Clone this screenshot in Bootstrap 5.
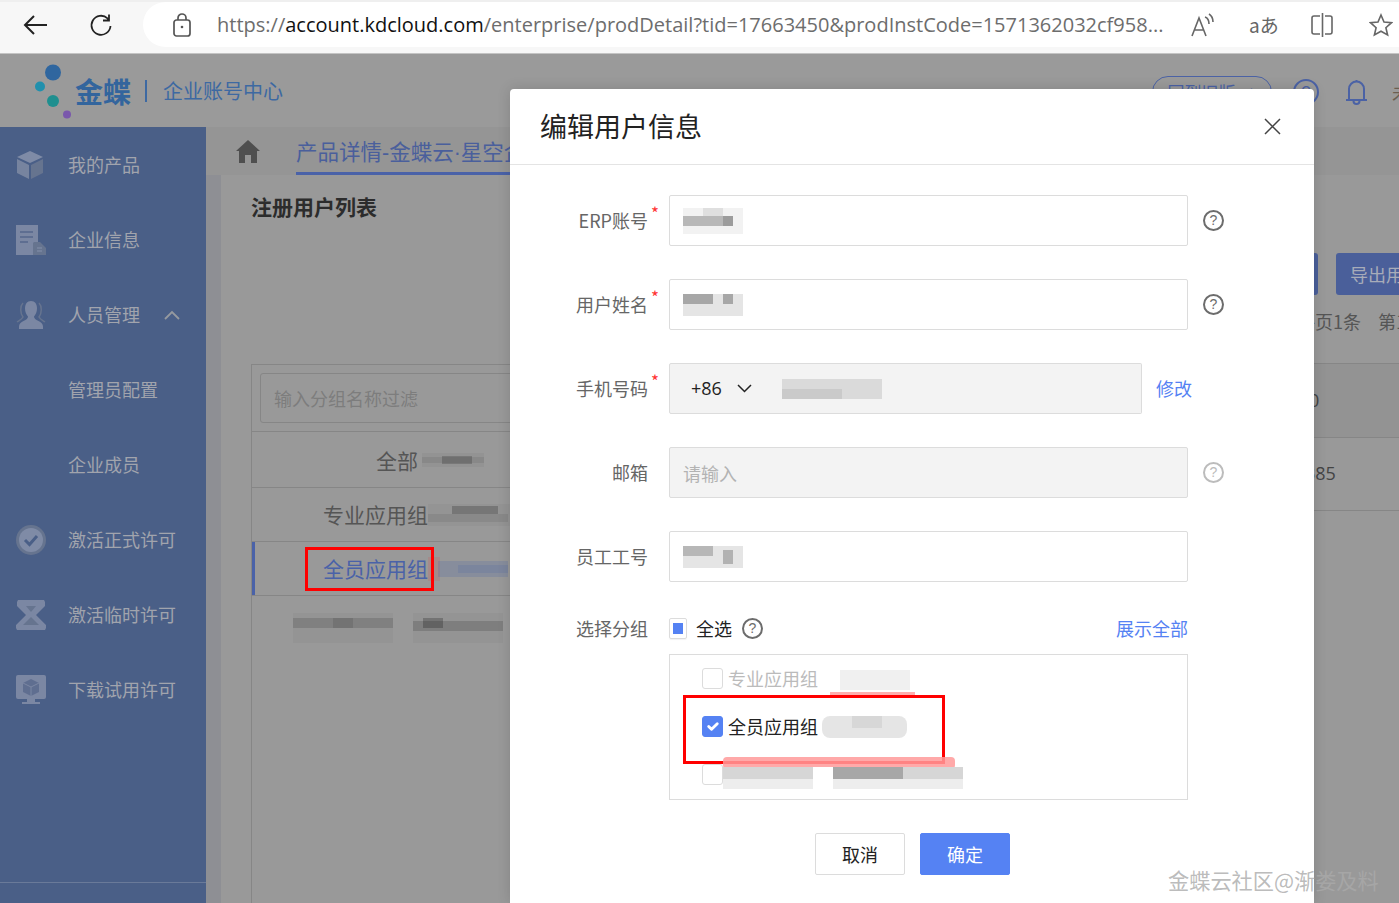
<!doctype html>
<html lang="zh">
<head>
<meta charset="utf-8">
<title>编辑用户信息</title>
<link rel="stylesheet" href="https://cdn.jsdelivr.net/npm/bootstrap@5.3.0/dist/css/bootstrap.min.css">
<style>
html,body{height:903px;overflow:hidden}
body{width:1399px;background:#999;font-family:"Noto Sans CJK SC","Liberation Sans",sans-serif;font-size:18px;color:#333;position:relative}
svg{display:block;flex:none}
.chrome-bar{height:54px;background:#f7f7f7;border-top:2px solid #efefef;border-bottom:1px solid #c4c4c4;padding:0 0 6px 23px}
.reload-ic{margin-left:42px}
.url-pill{margin-left:30px;width:1300px;height:45px;background:#fff;border-radius:23px 0 0 23px;padding-left:30px}
.url-text{font-family:"Open Sans","Noto Sans",sans-serif;font-size:20px;color:#6d6d6d;white-space:nowrap;margin-left:26px;width:948px;overflow:hidden}
.url-text b{font-weight:400;color:#111}
.read-ic{margin-left:25px}
.trans-ic{margin-left:33px;font-size:19px;line-height:24px;color:#666}
.split-ic{margin-left:31px}
.star-ic{margin-left:35px}
.app-head{height:73px;background:#9a9a9a;padding-left:30px;flex:none}
.brand-cn{font-size:28px;font-weight:700;color:#33659d;line-height:1}
.brand-bar{width:2px;height:22px;background:#3d69a2;margin:0 16px 0 14px}
.brand-sub{font-size:20px;color:#3d69a2}
.old-pill{width:120px;height:32px;border:1px solid #4b62a5;border-radius:16px;color:#4b62a5;font-size:17px;margin-right:21px;line-height:30px;text-align:center}
.head-right{padding-top:22px;align-self:flex-start}
.bell-ic{margin-left:26px}
.user-char{margin-left:24px;margin-right:-13px;color:#6b5e50;width:20px;overflow:hidden;white-space:nowrap}
.app-body{height:776px}
.side-nav{width:206px;background:#4a5f87;flex:none}
.nav-row{height:75px;padding-left:16px;color:#a1a4ad;font-size:18px}
.nav-label{margin-left:22px}
.nav-slot{width:30px;flex:none}
.nav-chev{margin-left:24px}
.side-rule{height:1px;background:#6a7a99;margin-top:155px}
.main-area{width:1193px;flex:none}
.tab-strip{height:48px;background:#959595;padding-left:30px}
.tab-title{margin-left:36px;font-family:"Liberation Sans","Noto Sans CJK SC",sans-serif;font-size:21.5px;color:#4a5f9c;border-bottom:3px solid #4a62a8;height:48px;line-height:53px;white-space:nowrap;width:300px;overflow:hidden}
.main-rest{height:728px}
.gutter{width:15px;background:#8e8f94;flex:none}
.main-pane{flex:1;padding:18px 0 0 30px}
.pane-title{font-size:21px;font-weight:700;color:#2c2c2c;line-height:26px}
.pane-cols{margin-top:34px}
.tree-col{width:400px;margin-top:111px;flex:none;border-left:1px solid #868686;border-top:1px solid #868686;height:539px}
.tree-search{height:67px;padding:8px 0 0 8px;border-bottom:1px solid #868686}
.tree-search div{height:50px;border:1px solid #868686;border-radius:3px;padding-left:13px;line-height:48px;color:#7d7d7d}
.tree-item{height:54px;border-bottom:1px solid #868686;font-size:21px;color:#555;padding-top:2px;white-space:nowrap}
.tree-item.is-first{height:55.5px}
.tree-item.is-on{color:#4a62a8;box-shadow:inset 3px 0 0 #4a62a8}
.tree-name{width:176px;text-align:right;flex:none}
.is-first .tree-name{width:166px}
.tree-last{height:64px;padding-left:41px}
.right-col{width:776px;margin-left:9px;flex:none}
.tool-row{gap:18px}
.tool-btn{height:42px;width:100px;background:#4a5f9a;color:#a7acb9;border-radius:3px;line-height:42px;text-align:center;white-space:nowrap;overflow:hidden;font-size:18px}
.pager{margin-top:8px;height:37px;color:#555;gap:17px;padding-right:12px}
.data-rows{margin-top:23px;border-top:1px solid #868686}
.data-row{height:73.5px;border-bottom:1px solid #868686;padding-left:645px;color:#444;font-family:"Open Sans",sans-serif;font-size:18px}
.data-row.is-dim{background:#939393}
.modal-box.modal-content{position:absolute;left:510px;top:89px;width:804px;height:814px;background:#fff;color:#333;border:0;border-radius:4px 4px 0 0;box-shadow:0 0 14px rgba(0,0,0,.14);display:block;overflow:visible}
.modal-box .modal-header{height:76px;padding:0 30px;border-bottom:1px solid #e4e4e4;border-radius:0}
.modal-box h5{font-size:27px;font-weight:400;color:#222;margin:0}
.close-btn{margin-right:3px}
.form-zone{padding:30px 0 0 0}
.form-line{height:51px;margin-bottom:33px}
.field-label{width:138px;flex:none;text-align:right;color:#666;position:relative;white-space:nowrap;font-size:18px}
.req-mark{position:absolute;left:141px;top:-4px;color:#f33;font-size:17px;line-height:20px}
.field-box{margin-left:21px;width:519px;height:51px;flex:none;border:1px solid #dcdcdc;border-radius:2px;padding:0 13px;box-shadow:none;font-size:18px}
.field-box:disabled{background:#f3f3f3;border-color:#dcdcdc}
.field-box::placeholder{color:#b3b3b3}
.help-dot{width:21px;height:21px;border:2px solid #6c6c6c;border-radius:50%;font-size:14px;line-height:17px;text-align:center;color:#6c6c6c;font-family:"Liberation Sans",sans-serif;flex:none;display:block}
.help-dot.is-off{border-color:#bcbcbc;color:#bcbcbc}
.help-gap{margin-left:15px}
.help-near{margin-left:10px}
.phone-group{margin-left:21px;width:473px;height:51px;flex:none;flex-wrap:nowrap}
.phone-code.input-group-text{width:97px;background:#f3f3f3;border:1px solid #dcdcdc;border-radius:2px 0 0 2px;padding:0 13px 0 21px;font-family:"Open Sans",sans-serif;font-size:18px;color:#222;justify-content:space-between}
.phone-num{background:#f3f3f3;border:1px solid #dcdcdc;border-left:0;border-radius:0 2px 2px 0;flex:1;padding-left:17px}
.link-blue{color:#5582f3;text-decoration:none;font-size:18px;white-space:nowrap}
.link-edit{margin-left:14px}
.pick-line{height:27px}
.pick-head{margin-left:21px;width:519px;flex:none}
.mini-box{width:18px;height:21px;border:1px solid #dcdcdc;border-radius:2px;padding:4px 3px;margin-right:9px;box-shadow:0 1px 1px rgba(0,0,0,.05)}
.mini-box i{display:block;width:10px;height:11px;background:#5582f3}
.pick-all{color:#222}
.pick-panel{margin:12px 0 0 159px;width:519px;height:146px;border:1px solid #dcdcdc;position:relative;padding:13px 0 0 32px;flex:none}
.pick-item{height:21px;margin-bottom:27px;color:#222;font-size:18px;white-space:nowrap}
.pick-item.is-off{color:#bbb}
.pick-item .form-check-input{width:21px;height:21px;margin:0 5px 0 0;border:1px solid #dcdcdc;border-radius:3px;float:none;flex:none}
.pick-item .form-check-input:disabled{opacity:1;background-color:#fff}
.pick-item .form-check-input:checked{background-color:#5582f3;border-color:#5582f3}
.blur-a{margin-left:12px;margin-top:8px}
.blur-b{margin-left:4px}
.blur-c{left:53px;top:102px}
.red-frame{position:absolute;border:3px solid #f00;pointer-events:none}
.frame-a{left:13px;top:40px;width:262px;height:69px}
.frame-b{left:305px;top:547px;width:129px;height:44px}
.modal-foot{gap:15px;margin-top:33px;padding-left:305px}
.foot-btn{width:90px;height:42px;border-radius:2px;font-size:18px;padding:0;line-height:40px}
.foot-cancel{background:#fff;border:1px solid #dcdcdc;color:#222}
.foot-ok,.foot-ok:hover{background:#5582f3;border:1px solid #5582f3;color:#fff}
.mark-text{position:absolute;left:1168px;top:863px;font-size:21.2px;color:rgba(170,170,170,.8);white-space:nowrap;line-height:34px}
</style>
</head>
<body>

<div class="chrome-bar d-flex align-items-center">
  <svg width="24" height="22" viewBox="0 0 24 22" fill="none" stroke="#222" stroke-width="2"><path d="M24 11H2M11 2l-9 9 9 9"/></svg>
  <svg class="reload-ic" width="24" height="24" viewBox="0 0 24 24" fill="none" stroke="#222" stroke-width="1.800"><path d="M20 1.500v6h-6M21.500 13a9.500 9.500 0 1 1-3-7.700L20 7.500"/></svg>
  <div class="url-pill d-flex align-items-center">
    <svg width="18" height="24" viewBox="0 0 18 24" fill="none" stroke="#555" stroke-width="1.700"><rect x="1" y="7" width="16" height="16" rx="2.500"/><path d="M5 7V5a4 4 0 0 1 8 0v2"/><circle cx="9" cy="14" r="1.300" fill="#555" stroke="none"/></svg>
    <div class="url-text">https://<b>account.kdcloud.com</b>/enterprise/prodDetail?tid=17663450&amp;prodInstCode=1571362032cf958...</div>
    <svg class="read-ic" width="26" height="24" viewBox="0 0 26 24" fill="none" stroke="#666" stroke-width="1.600"><path d="M2 23 9 5l7 18M4.500 17h9M15 4c3 1 4 4 4 7M19 1c3 2 4 5 4 8"/></svg>
    <div class="trans-ic">aあ</div>
    <svg class="split-ic" width="24" height="24" viewBox="0 0 24 24" fill="none" stroke="#666" stroke-width="1.600"><path d="M10 3H4a2 2 0 0 0-2 2v14a2 2 0 0 0 2 2h6M15 3h5a2 2 0 0 1 2 2v14a2 2 0 0 1-2 2h-5M12.500 0v24"/></svg>
    <svg class="star-ic" width="24" height="24" viewBox="0 0 24 24" fill="none" stroke="#666" stroke-width="1.600"><path d="M12 2l3 7 7.500.7-5.600 5 1.700 7.300L12 18.200 5.400 22l1.700-7.300-5.600-5L9 9z"/></svg>
  </div>
</div>

<div class="app-head d-flex align-items-center">
  <svg width="45" height="58" viewBox="0 0 45 58"><circle cx="23" cy="10.500" r="8" fill="#2f669f"/><circle cx="10" cy="24.500" r="5" fill="#2190ad"/><circle cx="23" cy="39" r="6" fill="#1f8f8f"/><circle cx="37" cy="52.500" r="4" fill="#7a58ac"/></svg>
  <span class="brand-cn">金蝶</span><i class="brand-bar"></i><span class="brand-sub">企业账号中心</span>
  <div class="head-right d-flex align-items-center ms-auto">
    <div class="old-pill">回到旧版 →</div>
    <svg width="26" height="26" viewBox="0 0 26 26" fill="none" stroke="#4b62a5" stroke-width="2"><circle cx="13" cy="13" r="12"/><text x="13" y="19" font-size="17" text-anchor="middle" fill="#4b62a5" stroke="none" font-family="Liberation Sans">?</text></svg>
    <svg class="bell-ic" width="23" height="26" viewBox="0 0 23 26" fill="none" stroke="#4b62a5" stroke-width="2"><path d="M1 21h21M4 21V10a7.500 7.500 0 0 1 15 0v11M11.500 1v2M8.500 22a3 3 0 0 0 6 0"/></svg>
    <span class="user-char">未</span>
  </div>
</div>

<div class="app-body d-flex">
  <nav class="side-nav">
    <div class="nav-row d-flex align-items-center"><span class="nav-slot">
      <svg width="28" height="28" viewBox="0 0 28 28"><path d="M14 0 27 6 14 12 1 6z" fill="#7f8ba6"/><path d="M1 8l12 6v14L1 22z" fill="#77849f"/><path d="M27 8l-12 6v14l12-6z" fill="#66748f"/></svg></span><span class="nav-label">我的产品</span></div>
    <div class="nav-row d-flex align-items-center"><span class="nav-slot">
      <svg width="30" height="30" viewBox="0 0 30 30"><path d="M0 0h22v30H0z" fill="#7b87a3"/><path d="M4 7h13M4 12h13M4 17h8" stroke="#55678c" stroke-width="1.600"/><path d="M18 17h6l6 6v7H17V18z" fill="#66748f"/><path d="M21 23h5M21 26h5" stroke="#7b87a3" stroke-width="1.500"/></svg></span><span class="nav-label">企业信息</span></div>
    <div class="nav-row d-flex align-items-center"><span class="nav-slot">
      <svg width="30" height="28" viewBox="0 0 30 28"><path d="M7 2C4 5 4 12 7 16c-1 2-3 3-6 5M23 2c3 3 3 10 0 14 1 2 3 3 6 5" fill="none" stroke="#66748f" stroke-width="1.500"/><path d="M15 0c4 0 6 3 6 7.500 0 3.500-1.500 6.500-3 8 0 2 1.500 3 4.500 4.500 2.500 1 4.500 3 4.500 5.500V28H3v-2.500C3 23 5 21 7.500 20c3-1.500 4.500-2.500 4.500-4.500-1.500-1.500-3-4.500-3-8C9 3 11 0 15 0z" fill="#7b87a3"/></svg></span><span class="nav-label">人员管理</span>
      <svg class="nav-chev" width="16" height="10" viewBox="0 0 16 10" fill="none" stroke="#95999f" stroke-width="1.800"><path d="M1 9l7-7 7 7"/></svg></div>
    <div class="nav-row d-flex align-items-center"><span class="nav-slot"></span><span class="nav-label">管理员配置</span></div>
    <div class="nav-row d-flex align-items-center"><span class="nav-slot"></span><span class="nav-label">企业成员</span></div>
    <div class="nav-row d-flex align-items-center"><span class="nav-slot">
      <svg width="30" height="30" viewBox="0 0 30 30"><circle cx="15" cy="15" r="15" fill="#66748f"/><circle cx="15" cy="15" r="12" fill="#7f8ba6"/><path d="M9 15l4.500 4.500L21 11" fill="none" stroke="#4a5f87" stroke-width="3"/></svg></span><span class="nav-label">激活正式许可</span></div>
    <div class="nav-row d-flex align-items-center"><span class="nav-slot">
      <svg width="30" height="30" viewBox="0 0 30 30"><path d="M2 0h26l1 2v4l-9 9 10 10v3l-1 2H1l-1-2v-3l10-10-9-9V2z" fill="#7b87a3"/><path d="M10 6h10l-5 6zM15 17l8 8H7z" fill="#66748f"/></svg></span><span class="nav-label">激活临时许可</span></div>
    <div class="nav-row d-flex align-items-center"><span class="nav-slot">
      <svg width="30" height="30" viewBox="0 0 30 30"><rect width="30" height="24" rx="2" fill="#7b87a3"/><path d="M11 24h8v3h-8zM6 27h18v2H6z" fill="#7b87a3"/><path d="M15 4l8 4v9l-8 4-8-4V8z" fill="#5f6e90"/><path d="M7 8l8 4 8-4M15 12v9" stroke="#7b87a3" stroke-width="1" fill="none"/></svg></span><span class="nav-label">下载试用许可</span></div>
    <div class="side-rule"></div>
  </nav>

  <div class="main-area">
    <div class="tab-strip d-flex align-items-center">
      <svg width="24" height="23" viewBox="0 0 24 23"><path d="M12 0 24 11h-3v12h-6v-8H9v8H3V11H0z" fill="#4f4f4f"/></svg>
      <div class="tab-title">产品详情-金蝶云·星空企业版</div>
    </div>
    <div class="main-rest d-flex">
      <div class="gutter"></div>
      <div class="main-pane">
        <div class="pane-title">注册用户列表</div>
        <div class="pane-cols d-flex">
          <div class="tree-col">
            <div class="tree-search"><div>输入分组名称过滤</div></div>
            <div class="tree-item is-first d-flex align-items-center"><span class="tree-name">全部</span>
              <svg width="62" height="22" viewBox="0 0 62 22" class="ms-1"><g shape-rendering="crispEdges"><rect y="4" width="62" height="14" fill="#000" opacity=".04"/><rect x="20" y="7" width="30" height="8" fill="#000" opacity=".18"/><rect x="0" y="8" width="62" height="6" fill="#000" opacity=".07"/></g></svg></div>
            <div class="tree-item d-flex align-items-center"><span class="tree-name">专业应用组</span>
              <svg width="90" height="22" viewBox="0 0 90 22"><g shape-rendering="crispEdges"><rect width="90" height="22" fill="#000" opacity=".03"/><rect x="24" y="2" width="46" height="8" fill="#000" opacity=".2"/><rect x="0" y="10" width="80" height="8" fill="#000" opacity=".07"/></g></svg></div>
            <div class="tree-item is-on d-flex align-items-center"><span class="tree-name">全员应用组</span>
              <svg width="90" height="24" viewBox="0 0 90 24"><g shape-rendering="crispEdges"><rect x="0" width="12" height="24" fill="#c46a6a" opacity=".3"/><rect x="10" y="4" width="70" height="16" fill="#4a62a8" opacity=".22"/><rect x="30" y="8" width="50" height="8" fill="#4a62a8" opacity=".18"/></g></svg></div>
            <div class="tree-last d-flex align-items-center">
              <svg width="214" height="30" viewBox="0 0 214 30"><g shape-rendering="crispEdges"><rect width="100" height="30" fill="#000" opacity=".03"/><rect x="120" width="90" height="30" fill="#000" opacity=".03"/><rect y="5" width="100" height="10" fill="#000" opacity=".13"/><rect x="40" y="5" width="20" height="10" fill="#000" opacity=".1"/><rect x="120" y="8" width="90" height="10" fill="#000" opacity=".15"/><rect x="130" y="5" width="20" height="10" fill="#000" opacity=".22"/></g></svg></div>
          </div>
          <div class="right-col">
            <div class="tool-row d-flex justify-content-end">
              <div class="tool-btn">批量导入</div>
              <div class="tool-btn">导出用户</div>
            </div>
            <div class="pager d-flex justify-content-end align-items-center"><span>每页1条</span><span>第1页</span></div>
            <div class="data-rows">
              <div class="data-row is-dim d-flex align-items-center"><span class="ps-1">0</span></div>
              <div class="data-row d-flex align-items-center">385</div>
            </div>
          </div>
        </div>
      </div>
    </div>
  </div>
</div>

<div class="red-frame frame-b"></div>

<div class="modal-content modal-box">
  <div class="modal-header d-flex align-items-center justify-content-between">
    <h5>编辑用户信息</h5>
    <button type="button" class="btn close-btn p-0 border-0" aria-label="关闭"><svg width="17" height="17" viewBox="0 0 17 17" stroke="#444" stroke-width="1.500"><path d="M1 1l15 15M16 1 1 16"/></svg></button>
  </div>
  <div class="form-zone">
    <div class="form-line d-flex align-items-center">
      <div class="field-label">ERP账号<span class="req-mark">*</span></div>
      <div class="form-control field-box d-flex align-items-center"><svg width="60" height="26" viewBox="0 0 60 26"><g shape-rendering="crispEdges"><rect width="60" height="26" fill="#000" opacity=".05"/><rect y="8" width="50" height="10" fill="#000" opacity=".24"/><rect x="40" y="8" width="10" height="10" fill="#000" opacity=".15"/><rect x="20" width="20" height="8" fill="#000" opacity=".08"/></g></svg></div>
      <span class="help-dot help-gap">?</span>
    </div>
    <div class="form-line d-flex align-items-center">
      <div class="field-label">用户姓名<span class="req-mark">*</span></div>
      <div class="form-control field-box d-flex align-items-center"><svg width="60" height="22" viewBox="0 0 60 22"><g shape-rendering="crispEdges"><rect width="60" height="22" fill="#000" opacity=".1"/><rect width="30" height="10" fill="#000" opacity=".27"/><rect x="40" width="10" height="10" fill="#000" opacity=".27"/></g></svg></div>
      <span class="help-dot help-gap">?</span>
    </div>
    <div class="form-line d-flex align-items-center">
      <div class="field-label">手机号码<span class="req-mark">*</span></div>
      <div class="input-group phone-group">
        <span class="input-group-text phone-code">+86<svg width="15" height="9" viewBox="0 0 15 9" fill="none" stroke="#222" stroke-width="1.500"><path d="M1 1l6.500 6.500L14 1"/></svg></span>
        <div class="phone-num d-flex align-items-center"><svg width="100" height="20" viewBox="0 0 100 20"><g shape-rendering="crispEdges"><rect width="100" height="20" fill="#000" opacity=".1"/><rect y="10" width="60" height="10" fill="#000" opacity=".07"/></g></svg></div>
      </div>
      <a class="link-blue link-edit" href="#">修改</a>
    </div>
    <div class="form-line d-flex align-items-center">
      <div class="field-label">邮箱</div>
      <input class="form-control field-box" type="text" placeholder="请输入" disabled>
      <span class="help-dot help-gap is-off">?</span>
    </div>
    <div class="form-line d-flex align-items-center">
      <div class="field-label">员工工号</div>
      <div class="form-control field-box d-flex align-items-center"><svg width="60" height="22" viewBox="0 0 60 22"><g shape-rendering="crispEdges"><rect width="60" height="22" fill="#000" opacity=".1"/><rect width="30" height="10" fill="#000" opacity=".2"/><rect x="40" y="4" width="10" height="14" fill="#000" opacity=".22"/></g></svg></div>
    </div>
    <div class="d-flex align-items-center pick-line">
      <div class="field-label">选择分组</div>
      <div class="pick-head d-flex align-items-center">
        <span class="mini-box"><i></i></span><span class="pick-all">全选</span><span class="help-dot help-near">?</span>
        <a class="link-blue ms-auto" href="#">展示全部</a>
      </div>
    </div>
    <div class="pick-panel">
      <div class="pick-item is-off d-flex align-items-center"><input class="form-check-input" type="checkbox" disabled aria-label="专业应用组"><span>专业应用组</span>
        <svg class="blur-a" width="85" height="30" viewBox="0 0 85 30"><rect y="20" width="85" height="10" fill="#ff9a9a" opacity=".8" rx="3"/><rect width="85" height="24" fill="#fff"/><rect x="10" y="2" width="70" height="20" fill="#000" opacity=".06"/></svg></div>
      <div class="pick-item d-flex align-items-center"><input class="form-check-input" type="checkbox" checked aria-label="全员应用组"><span>全员应用组</span>
        <svg class="blur-b" width="85" height="22" viewBox="0 0 85 22"><rect width="85" height="22" rx="8" fill="#000" opacity=".1"/><rect x="30" width="30" height="12" fill="#000" opacity=".06"/></svg></div>
      <div class="pick-item d-flex align-items-center"><input class="form-check-input" type="checkbox" disabled aria-label="其他分组"></div>
      <div class="red-frame frame-a"></div>
      <svg class="position-absolute blur-c" width="240" height="34" viewBox="0 0 240 34"><rect width="232" height="12" rx="4" fill="#ff9a9a" opacity=".85"/><rect y="10" width="240" height="24" fill="#fff"/><g shape-rendering="crispEdges"><rect y="10" width="240" height="12" fill="#000" opacity=".16"/><rect y="22" width="240" height="10" fill="#000" opacity=".07"/><rect x="110" y="10" width="70" height="12" fill="#000" opacity=".22"/><rect x="90" y="10" width="20" height="22" fill="#fff"/></g></svg>
    </div>
    <div class="modal-foot d-flex">
      <button type="button" class="btn foot-btn foot-cancel">取消</button>
      <button type="button" class="btn foot-btn foot-ok">确定</button>
    </div>
  </div>
</div>

<div class="mark-text">金蝶云社区@渐娄及料</div>

<script src="https://cdn.jsdelivr.net/npm/bootstrap@5.3.0/dist/js/bootstrap.bundle.min.js"></script>
</body>
</html>
